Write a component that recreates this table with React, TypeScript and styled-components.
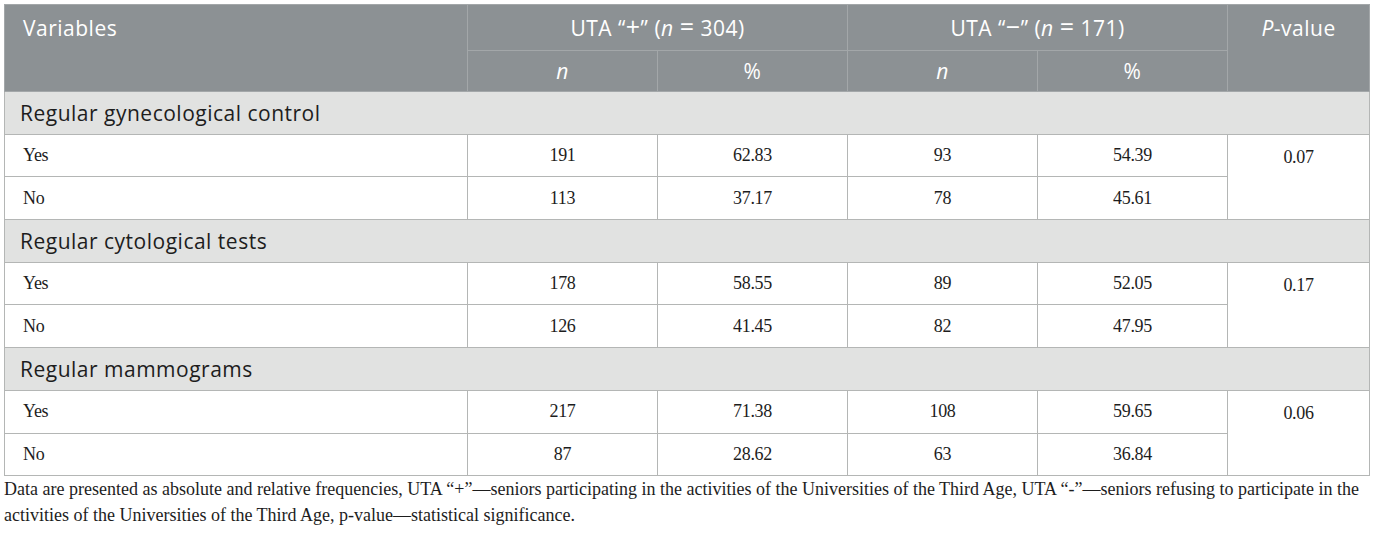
import styled, { createGlobalStyle } from 'styled-components';

const GlobalStyle = createGlobalStyle`
  body {
    margin: 0;
    background: #ffffff;
  }
`;

const Page = styled.div`
  padding: 4px 6px 0 4px;
`;

const Table = styled.table`
  width: 1365px;
  border-collapse: collapse;
  table-layout: fixed;
  border: 1px solid #b4b6b5;
`;

const HeadCell = styled.th<{ $align?: 'left' | 'center'; $top?: boolean; $tall?: boolean }>`
  background: #8c9194;
  color: #ffffff;
  font-family: 'Open Sans', 'DejaVu Sans', sans-serif;
  font-weight: 400;
  font-size: 21px;
  letter-spacing: 0.5px;
  text-align: ${(p) => p.$align || 'center'};
  vertical-align: ${(p) => (p.$top ? 'top' : 'middle')};
  padding: ${(p) => (p.$top ? '9px 18px 0' : '0 18px')};
  border: 1px solid #a3a7a9;
  height: ${(p) => (p.$tall ? '45px' : '40px')};
  i {
    font-style: italic;
  }
`;

// math operators in the header are drawn wider than the text around them
const Op = styled.span<{ $gap?: number }>`
  display: inline-block;
  font-size: 25px;
  line-height: 1;
  margin: 0 ${(p) => p.$gap ?? 0}px;
`;

const GroupCell = styled.td`
  background: #e1e2e1;
  font-family: 'Open Sans', 'DejaVu Sans', sans-serif;
  font-size: 21px;
  letter-spacing: 0.5px;
  color: #1d1d1d;
  padding: 0 15px;
  height: 41.7px;
  border: 1px solid #b4b6b5;
`;

const Cell = styled.td<{ $align?: 'left' | 'center'; $top?: boolean }>`
  font-family: 'Liberation Serif', 'Times New Roman', serif;
  font-size: 18px;
  letter-spacing: -0.3px;
  color: #1d1d1d;
  text-align: ${(p) => p.$align || 'center'};
  vertical-align: ${(p) => (p.$top ? 'top' : 'middle')};
  padding: ${(p) => (p.$top ? '12px 18px 0' : '0 18px')};
  height: 41.7px;
  border: 1px solid #b4b6b5;
`;

const Caption = styled.p`
  margin: 0;
  font-family: 'Liberation Serif', 'Times New Roman', serif;
  font-size: 18px;
  line-height: 26px;
  color: #1d1d1d;
`;

interface Group {
  title: string;
  yes: [string, string, string, string];
  no: [string, string, string, string];
  p: string;
}

const groups: Group[] = [
  {
    title: 'Regular gynecological control',
    yes: ['191', '62.83', '93', '54.39'],
    no: ['113', '37.17', '78', '45.61'],
    p: '0.07',
  },
  {
    title: 'Regular cytological tests',
    yes: ['178', '58.55', '89', '52.05'],
    no: ['126', '41.45', '82', '47.95'],
    p: '0.17',
  },
  {
    title: 'Regular mammograms',
    yes: ['217', '71.38', '108', '59.65'],
    no: ['87', '28.62', '63', '36.84'],
    p: '0.06',
  },
];

const App = () => {
  return (
    <Page>
      <GlobalStyle />
      <Table>
        <colgroup>
          <col style={{ width: 463 }} />
          <col style={{ width: 190 }} />
          <col style={{ width: 190 }} />
          <col style={{ width: 190 }} />
          <col style={{ width: 190 }} />
          <col style={{ width: 142 }} />
        </colgroup>
        <thead>
          <tr>
            <HeadCell rowSpan={2} $align="left" $top>
              Variables
            </HeadCell>
            <HeadCell colSpan={2} $tall>
              UTA “<Op>+</Op>” (<i>n</i> <Op>=</Op> 304)
            </HeadCell>
            <HeadCell colSpan={2} $tall>
              UTA “<Op>−</Op>” (<i>n</i> <Op>=</Op> 171)
            </HeadCell>
            <HeadCell rowSpan={2} $top>
              <i>P</i>-value
            </HeadCell>
          </tr>
          <tr>
            <HeadCell>
              <i>n</i>
            </HeadCell>
            <HeadCell>%</HeadCell>
            <HeadCell>
              <i>n</i>
            </HeadCell>
            <HeadCell>%</HeadCell>
          </tr>
        </thead>
        {groups.map((g) => (
          <tbody key={g.title}>
            <tr>
              <GroupCell colSpan={6}>{g.title}</GroupCell>
            </tr>
            <tr>
              <Cell $align="left">Yes</Cell>
              {g.yes.map((v, i) => (
                <Cell key={i}>{v}</Cell>
              ))}
              <Cell rowSpan={2} $top>
                {g.p}
              </Cell>
            </tr>
            <tr>
              <Cell $align="left">No</Cell>
              {g.no.map((v, i) => (
                <Cell key={i}>{v}</Cell>
              ))}
            </tr>
          </tbody>
        ))}
      </Table>
      <Caption>
        Data are presented as absolute and relative frequencies, UTA “+”—seniors participating in the
        activities of the Universities of the Third Age, UTA “-”—seniors refusing to participate in the
        activities of the Universities of the Third Age, p-value—statistical significance.
      </Caption>
    </Page>
  );
};

export default App;
